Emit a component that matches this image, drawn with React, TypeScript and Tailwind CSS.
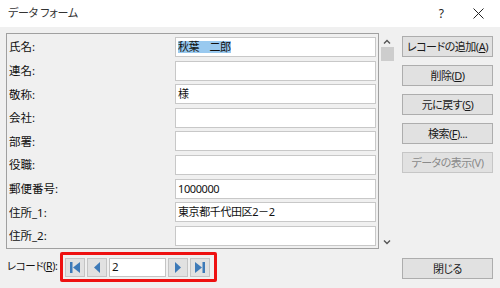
import React from "react";

const font = "font-['Noto_Sans','Noto_Sans_CJK_JP',sans-serif]";

function Btn({ label, acc, tail, disabled, className = "" }: { label: string; acc?: string; tail?: string; disabled?: boolean; className?: string }) {
  return (
    <div
      className={`h-[21px] w-[91px] flex items-center justify-center border text-[11px] leading-none tracking-[-0.5px] [font-feature-settings:'palt'] ${
        disabled ? "border-[#c6c6c6] bg-[#e1e1e1] text-[#8a8a8a]" : "border-[#adadad] bg-[#e1e1e1] text-[#1a1a1a]"
      } ${className}`}
    >
      <span className="whitespace-nowrap">
        {label}
        {acc ? (
          <>
            (<span className="underline underline-offset-[1px]">{acc}</span>)
          </>
        ) : null}
        {tail}
      </span>
    </div>
  );
}

const rows: { label: string; value?: string; selected?: boolean }[] = [
  { label: "氏名:", value: "秋葉　二郎", selected: true },
  { label: "連名:" },
  { label: "敬称:", value: "様" },
  { label: "会社:" },
  { label: "部署:" },
  { label: "役職:" },
  { label: "郵便番号:", value: "1000000" },
  { label: "住所_1:", value: "東京都千代田区2－2" },
  { label: "住所_2:" },
];

function NavBtn({ children }: { children: React.ReactNode }) {
  return (
    <div className="w-[20px] h-[19px] bg-[#e1e1e1] border border-[#c4c4c4] flex items-center justify-center">
      {children}
    </div>
  );
}

export default function App() {
  const blue = "#3d7ab8";
  return (
    <div className={`w-[500px] h-[288px] bg-[#f0f0f0] flex flex-col ${font} text-black overflow-hidden`}>
      {/* Title bar */}
      <div className="h-[27px] bg-white flex items-center shrink-0">
        <span className="ml-[8px] text-[11px] text-[#333] [font-feature-settings:'palt'] tracking-[-0.3px]">データ フォーム</span>
        <span className="ml-auto mr-[29px] text-[12px] text-[#222]">?</span>
        <svg width="11" height="11" viewBox="0 0 11 11" className="mr-[16px]">
          <path d="M0.5 0.5 L10.5 10.5 M10.5 0.5 L0.5 10.5" stroke="#222" strokeWidth="1" />
        </svg>
      </div>

      <div className="flex flex-1">
        {/* Left column */}
        <div className="w-[394px] flex flex-col">
          <div className="flex mt-[6px]">
            <div className="ml-[6px] w-[373px] h-[216px] border border-[#a0a0a0] pt-[3px] pr-[1px] flex flex-col gap-[3.6px]">
              {rows.map((r) => (
                <div key={r.label} className="flex items-center h-[20px]">
                  <span className="pl-[2px] text-[11.5px] text-[#111] w-[168px]">{r.label}</span>
                  <div className="w-[201px] h-[20px] bg-white border border-[#c8c8c8] flex items-center pl-[2px] text-[11px] text-[#111]">
                    {r.value ? (
                      <span className={r.selected ? "bg-[#99c9ef] leading-[12px] tracking-[-0.5px]" : "leading-[12px] tracking-[-0.4px]"}>{r.value}</span>
                    ) : null}
                  </div>
                </div>
              ))}
            </div>
            {/* scrollbar */}
            <div className="w-[14px] ml-[1px] flex flex-col items-center">
              <svg width="8" height="6" viewBox="0 0 8 6" className="mt-[6px]">
                <path d="M1 4.5 L4 1.5 L7 4.5" fill="none" stroke="#555" strokeWidth="1.4" />
              </svg>
              <div className="w-[13px] h-[14px] bg-[#cdcdcd] mt-[2px]" />
              <svg width="8" height="6" viewBox="0 0 8 6" className="mt-auto mb-[4px]">
                <path d="M1 1.5 L4 4.5 L7 1.5" fill="none" stroke="#555" strokeWidth="1.4" />
              </svg>
            </div>
          </div>

          {/* record row */}
          <div className="flex items-center mt-[3px]">
            <span className="ml-[7px] text-[10.5px] text-[#111] w-[53px] whitespace-nowrap [font-feature-settings:'palt'] tracking-[-0.4px]">
              レコード(<span className="underline underline-offset-[1px]">R</span>):
            </span>
            <div className="h-[30px] w-[157px] border-[3px] border-[#ee1111] rounded-[2px] flex items-center gap-[2px] pl-[2px]">
              <NavBtn>
                <svg width="10" height="11" viewBox="0 0 10 11">
                  <rect x="0" y="0" width="2.5" height="11" fill={blue} />
                  <path d="M10 0 L3 5.5 L10 11 Z" fill={blue} />
                </svg>
              </NavBtn>
              <NavBtn>
                <svg width="6" height="11" viewBox="0 0 6 11">
                  <path d="M6 0 L0 5.5 L6 11 Z" fill={blue} />
                </svg>
              </NavBtn>
              <div className="w-[57px] h-[19px] bg-white border border-[#c4c4c4] flex items-center pl-[2px] text-[11.5px] text-[#111]">
                2
              </div>
              <NavBtn>
                <svg width="6" height="11" viewBox="0 0 6 11">
                  <path d="M0 0 L6 5.5 L0 11 Z" fill={blue} />
                </svg>
              </NavBtn>
              <NavBtn>
                <svg width="10" height="11" viewBox="0 0 10 11">
                  <path d="M0 0 L7 5.5 L0 11 Z" fill={blue} />
                  <rect x="7.5" y="0" width="2.5" height="11" fill={blue} />
                </svg>
              </NavBtn>
            </div>
          </div>
        </div>

        {/* Right column */}
        <div className="ml-[8px] pt-[9px] pb-[9px] flex flex-col">
          <div className="flex flex-col gap-[8px]">
            <Btn label="レコードの追加" acc="A" />
            <Btn label="削除" acc="D" />
            <Btn label="元に戻す" acc="S" />
            <Btn label="検索" acc="F" tail="..." />
            <Btn label="データの表示(V)" disabled />
          </div>
          <Btn label="閉じる" className="mt-auto" />
        </div>
      </div>
    </div>
  );
}
